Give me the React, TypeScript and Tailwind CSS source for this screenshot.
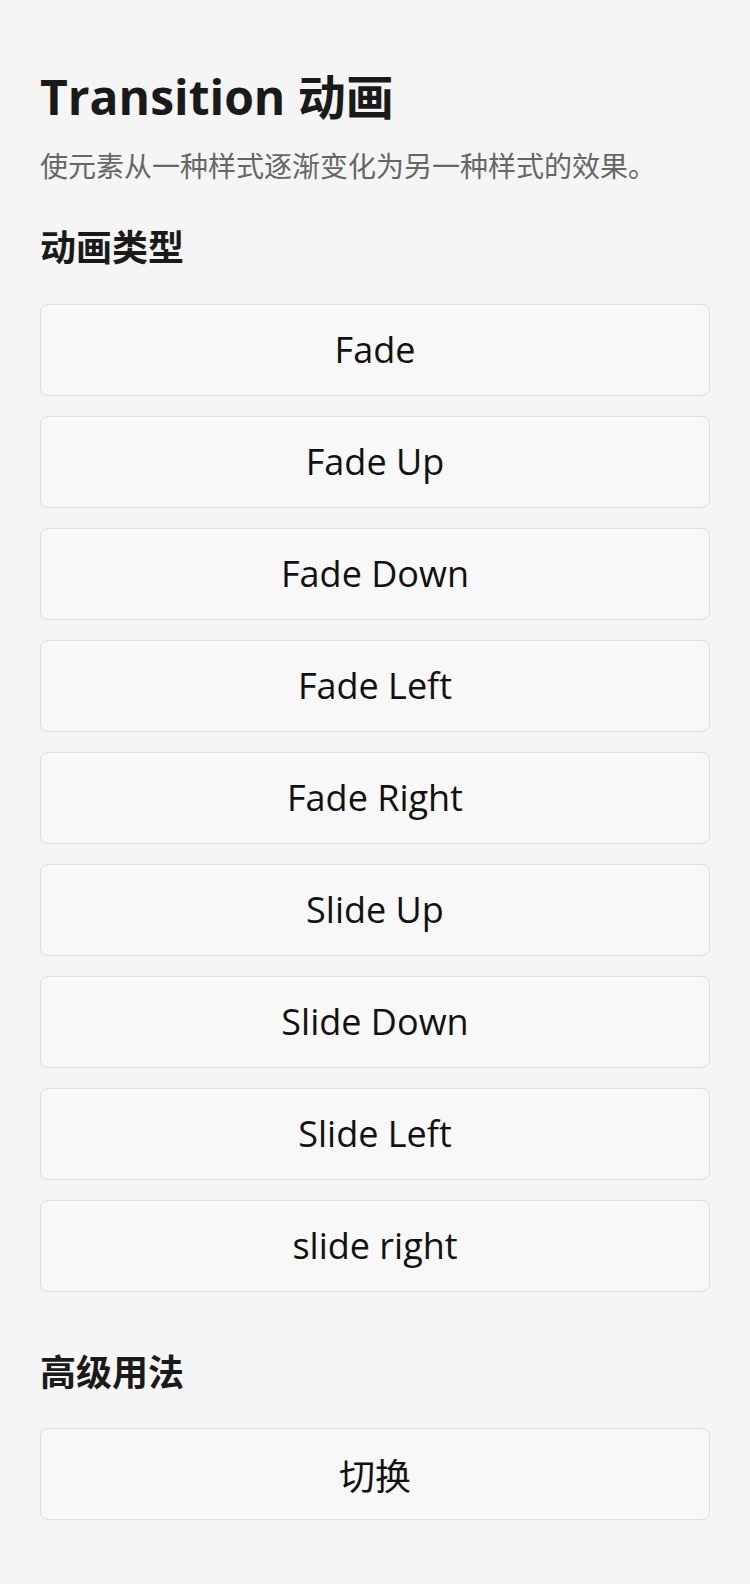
const latin = "font-['Open_Sans','Noto_Sans_CJK_SC',sans-serif]";
const cjk = "font-['Noto_Sans_CJK_SC',sans-serif]";

const types = [
  "Fade",
  "Fade Up",
  "Fade Down",
  "Fade Left",
  "Fade Right",
  "Slide Up",
  "Slide Down",
  "Slide Left",
  "slide right",
];

function DemoButton({ label, font }: { label: string; font: string }) {
  return (
    <button
      className={`w-full h-[92px] rounded-lg border border-[#dedede] bg-[#f8f8f8] text-[36px] leading-[48px] text-[#111] ${font}`}
    >
      {label}
    </button>
  );
}

export default function App() {
  return (
    <main className={`min-h-screen bg-[#f5f5f5] px-10 pt-[69px] pb-16 ${latin}`}>
      <h1 className="text-[48px] leading-[56px] font-bold text-[#1a1a1a]">Transition 动画</h1>
      <p className={`mt-5 text-[28px] leading-[40px] text-[#666] ${cjk}`}>
        使元素从一种样式逐渐变化为另一种样式的效果。
      </p>

      <h2 className={`mt-9 text-[36px] leading-[48px] font-bold text-[#1a1a1a] ${cjk}`}>动画类型</h2>
      <div className="mt-[35px] flex flex-col gap-5">
        {types.map((t) => (
          <DemoButton key={t} label={t} font={latin} />
        ))}
      </div>

      <h2 className={`mt-[54px] text-[36px] leading-[48px] font-bold text-[#1a1a1a] ${cjk}`}>高级用法</h2>
      <div className="mt-[34px]">
        <DemoButton label="切换" font={cjk} />
      </div>
    </main>
  );
}
